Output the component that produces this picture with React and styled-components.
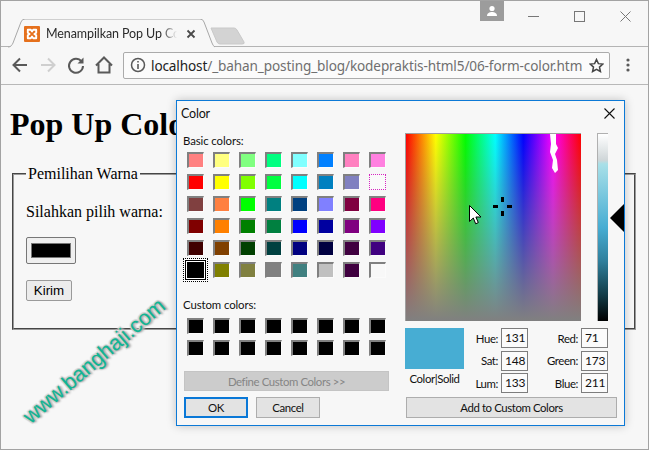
import React from 'react';
import styled, { createGlobalStyle } from 'styled-components';

const Global = createGlobalStyle`
  html, body { margin: 0; padding: 0; background: #f7f7f7; }
`;

const UI = 'Lato, "Open Sans", sans-serif';

const Frame = styled.div`
  position: relative;
  width: 649px;
  height: 450px;
  box-sizing: border-box;
  border: 1px solid #a3a3a3;
  background: #f7f7f7;
  overflow: hidden;
  display: flex;
  flex-direction: column;
`;

const TitleBar = styled.div`
  height: 46px;
  flex: none;
  box-sizing: border-box;
  border-bottom: 1px solid #b4b4b4;
  display: flex;
  align-items: flex-start;
  padding-left: 7px;
`;

const Tab = styled.div`
  position: relative;
  width: 205px;
  height: 29px;
  margin-top: 18px;
  flex: none;
  display: flex;
  align-items: center;
  padding-left: 16px;
  box-sizing: border-box;
`;

const TabShape = styled.svg`
  position: absolute;
  left: 0;
  top: 0;
`;

const Favicon = styled.svg`
  position: relative;
  flex: none;
  margin-right: 6px;
  margin-top: 1px;
`;

const TabTitle = styled.div`
  position: relative;
  width: 131px;
  flex: none;
  overflow: hidden;
  white-space: nowrap;
  font: 12.5px ${UI};
  letter-spacing: -0.1px;
  color: #2b2b2b;
  -webkit-mask-image: linear-gradient(90deg, #000 88%, transparent 100%);
  mask-image: linear-gradient(90deg, #000 88%, transparent 100%);
`;

const TabClose = styled.svg`
  position: relative;
  flex: none;
  margin-left: 9px;
`;

const NewTab = styled.svg`
  flex: none;
  margin: 26px 0 0 -3px;
`;

const Spacer = styled.div`
  flex: 1;
`;

const WindowControls = styled.div`
  display: flex;
  align-items: flex-start;
`;

const Avatar = styled.div`
  width: 24px;
  height: 20px;
  background: #9c9c9c;
  display: flex;
  align-items: center;
  justify-content: center;
  margin-right: 6px;
`;

const WinButton = styled.div`
  width: 46px;
  height: 30px;
  display: flex;
  align-items: center;
  justify-content: center;
`;

const Toolbar = styled.div`
  height: 38px;
  flex: none;
  box-sizing: border-box;
  border-bottom: 1px solid #b8b8b8;
  display: flex;
  align-items: center;
  padding: 0 0 1px 9px;
`;

const NavIcon = styled.svg`
  flex: none;
  margin-right: 8px;
`;

const AddressBar = styled.div`
  width: 487px;
  height: 27px;
  flex: none;
  box-sizing: border-box;
  margin-left: 1px;
  border: 1px solid #ababab;
  border-radius: 2px;
  background: #fbfbfb;
  display: flex;
  align-items: center;
  padding: 0 5px 0 6px;
  gap: 5px;
`;

const Url = styled.div`
  flex: 1;
  font: 13.6px "Noto Sans", sans-serif;
  color: #6f6f6f;
  white-space: nowrap;
  overflow: hidden;
  letter-spacing: -0.13px;
  strong { font-weight: 400; color: #222; }
`;

const Dots = styled.svg`
  flex: none;
  margin-left: 16px;
`;

const Content = styled.main`
  flex: 1;
  padding: 0 10px 0 9px;
  font-family: "Liberation Serif", serif;
  color: #000;
`;

const Heading = styled.h1`
  margin: 21.44px 0;
  font-size: 32px;
  line-height: 37px;
  font-weight: 700;
  white-space: nowrap;
`;

const FieldSet = styled.fieldset`
  margin: 0 2px;
  padding: 4.6px 11px 11px 12px;
  border: 2px groove #9a9a9a;
`;

const Legend = styled.legend`
  padding: 0 2px;
  font-size: 16px;
  line-height: 18px;
`;

const Para = styled.p`
  margin: 16px 0;
  font-size: 16px;
  line-height: 18px;
`;

const FormRow = styled.div`
  margin: 16px 0;
  display: flex;
`;

const ColorInput = styled.div`
  width: 50px;
  height: 27px;
  box-sizing: border-box;
  border: 1px solid #777;
  border-radius: 2px;
  background: #efefef;
  display: flex;
  align-items: center;
  justify-content: center;
`;

const ColorInner = styled.div`
  width: 40px;
  height: 15px;
  box-sizing: border-box;
  border: 1px solid #777;
  background: #000;
`;

const Submit = styled.div`
  width: 46px;
  height: 21px;
  box-sizing: border-box;
  border: 1px solid #9a9a9a;
  border-radius: 2px;
  background: #ececec;
  display: flex;
  align-items: center;
  justify-content: center;
  font: 13.33px "Liberation Sans", sans-serif;
`;

const Watermark = styled.div`
  position: absolute;
  left: -2px;
  top: 347px;
  width: 190px;
  text-align: center;
  transform: rotate(-40.5deg);
  font: 21.5px "Liberation Sans", sans-serif;
  line-height: 26px;
  color: #10b594;
  white-space: nowrap;
  text-shadow: 1px 1px 1px #a9a9a9, -1px -1px 1px #d4d4d4, 2px 2px 2px #bdbdbd, -1px 1px 1px #cfcfcf, 1px -1px 1px #cfcfcf;
`;

const Dialog = styled.section`
  position: absolute;
  left: 175px;
  top: 99px;
  width: 449px;
  height: 326px;
  box-sizing: border-box;
  border: 1px solid #0c79d6;
  background: #f7f7f7;
  box-shadow: 0 0 9px rgba(0, 0, 0, 0.22);
  font: 11.4px ${UI};
  letter-spacing: -0.4px;
  color: #111;
  display: flex;
  flex-direction: column;
`;

const DialogTitle = styled.header`
  height: 25px;
  flex: none;
  display: flex;
  align-items: center;
  justify-content: space-between;
  padding: 0 9px 0 4px;
  font-size: 12.5px;
  letter-spacing: -0.2px;
`;

const DialogBody = styled.div`
  display: flex;
  gap: 16px;
  padding-left: 7px;
`;

const LeftPane = styled.div`
  width: 205px;
  flex: none;
  display: flex;
  flex-direction: column;
`;

const PaneLabel = styled.div`
  height: 14px;
  line-height: 14px;
  margin-top: ${(p) => p.$top}px;
  letter-spacing: -0.1px;
  margin-left: -1px;
`;

const SwatchGrid = styled.div`
  display: grid;
  grid-template-columns: repeat(8, 17px);
  grid-auto-rows: 16px;
  column-gap: 9px;
  row-gap: 6px;
  margin: ${(p) => p.$top}px 0 0 3px;
`;

const Swatch = styled.div`
  box-sizing: border-box;
  background: ${(p) => p.$color};
  border-style: solid;
  border-width: 2px 1px 1px 2px;
  border-color: #808080 #fbfbfb #fbfbfb #808080;
  ${(p) => p.$selected && `
    outline: 1px dotted #000;
    outline-offset: 3px;
    box-shadow: 0 0 0 1px #fff, 0 0 0 2px #000, 0 0 0 3px #fff;
    border-color: #000;
  `}
  ${(p) => p.$marked && `
    border: 1px dotted #d626c0;
  `}
`;

const DefineButton = styled.div`
  height: 20px;
  margin-top: 15px;
  box-sizing: border-box;
  border: 1px solid #c4c4c4;
  background: #cccccc;
  color: #858585;
  display: flex;
  align-items: center;
  justify-content: center;
`;

const ButtonRow = styled.div`
  display: flex;
  gap: 8px;
  margin-top: 6px;
`;

const DialogButton = styled.div`
  width: 64px;
  height: 21px;
  box-sizing: border-box;
  border: ${(p) => (p.$primary ? '2px solid #0a78d7' : '1px solid #adadad')};
  background: #e3e3e3;
  display: flex;
  align-items: center;
  justify-content: center;
`;

const RightPane = styled.div`
  width: 212px;
  flex: none;
  padding-top: 7px;
  display: flex;
  flex-direction: column;
`;

const Pickers = styled.div`
  display: flex;
  gap: 16px;
`;

const SpectrumField = styled.div`
  position: relative;
  width: 176px;
  height: 188px;
  box-sizing: border-box;
  border-top: 1px solid #a0a0a0;
  border-left: 1px solid #a0a0a0;
  background:
    linear-gradient(180deg, rgba(128,128,128,0) 0%, rgba(128,128,128,1) 100%),
    linear-gradient(90deg, #f00 0%, #ff0 17%, #0f0 34%, #0ff 51%, #00f 67%, #f0f 84%, #f00 100%);
`;

const Overlay = styled.svg`
  position: absolute;
  left: ${(p) => p.$x}px;
  top: ${(p) => p.$y}px;
`;

const LumSlider = styled.div`
  position: relative;
  width: 11px;
  height: 188px;
  box-sizing: border-box;
  border-top: 1px solid #b0b0b0;
  border-left: 1px solid #b0b0b0;
  background: linear-gradient(180deg, #fff 0%, #cfd6d8 14%, #a9e0e8 16%, #47add3 50%, #2f7f9c 68%, #123c48 86%, #000 100%);
`;

const LumArrow = styled.div`
  position: absolute;
  left: 12px;
  top: 70px;
  width: 0;
  height: 0;
  border-style: solid;
  border-width: 14px 14px 14px 0;
  border-color: transparent #000 transparent transparent;
`;

const ValuesRow = styled.div`
  display: flex;
  margin-top: 7px;
`;

const PreviewColumn = styled.div`
  width: 59px;
  flex: none;
  display: flex;
  flex-direction: column;
  align-items: center;
`;

const PreviewBox = styled.div`
  width: 59px;
  height: 41px;
  background: #47add3;
`;

const PreviewLabel = styled.div`
  margin-top: 2px;
  height: 16px;
  line-height: 16px;
  white-space: nowrap;
`;

const ValueGrid = styled.div`
  display: grid;
  grid-template-columns: 34px 27px 47px 27px;
  grid-auto-rows: 20px;
  column-gap: 3px;
  row-gap: 2.5px;
  align-items: center;
`;

const ValueLabel = styled.div`
  text-align: right;
`;

const ValueBox = styled.div`
  height: 20px;
  box-sizing: border-box;
  border: 1px solid #7d7d7d;
  background: #fbfbfb;
  padding-left: 3px;
  line-height: 17px;
  font-size: 12px;
  letter-spacing: -0.2px;
`;

const AddButton = styled.div`
  height: 21px;
  margin: 4px 0 0 1px;
  box-sizing: border-box;
  border: 1px solid #adadad;
  background: #e3e3e3;
  display: flex;
  align-items: center;
  justify-content: center;
`;

const BASIC = [
  ['#ff8080', '#ffff80', '#80ff80', '#00ff80', '#80ffff', '#0080ff', '#ff80c0', '#ff80e0'],
  ['#ff0000', '#ffff00', '#80ff00', '#00ff40', '#00ffff', '#0080c0', '#8080c0', '#fafafa'],
  ['#804040', '#ff8040', '#00ff00', '#008080', '#004080', '#8080ff', '#800040', '#ff0080'],
  ['#800000', '#ff8000', '#008000', '#008040', '#0000ff', '#0000a0', '#800080', '#8000ff'],
  ['#400000', '#804000', '#004000', '#004040', '#000080', '#000040', '#400040', '#400080'],
  ['#000000', '#808000', '#808040', '#808080', '#408080', '#c0c0c0', '#400040', '#f8f8f8'],
].flat();

const VALUES = [
  ['Hue:', '131', 'Red:', '71'],
  ['Sat:', '148', 'Green:', '173'],
  ['Lum:', '133', 'Blue:', '211'],
].flat();

export default function App() {
  return (
    <Frame>
      <Global />
      <TitleBar>
        <Tab>
          <TabShape width="208" height="29" viewBox="0 0 208 29">
            <path d="M0 28 C3 28 4 26 5 24 L13 3 Q14 0 17 0 H192 Q195 0 196 3 L204 24 Q205 27 207 28" fill="#f7f7f7" stroke="#a8a8a8" />
          </TabShape>
          <Favicon width="16" height="16" viewBox="0 0 16 16">
            <rect width="16" height="16" rx="1" fill="#e5701c" />
            <path d="M3.8 3.8 H6.8 L8 5.4 L9.2 3.8 H12.2 V6.8 L10.4 8 L12.2 9.2 V12.2 H9.2 L8 10.6 L6.8 12.2 H3.8 V9.2 L5.6 8 L3.8 6.8 Z" fill="none" stroke="#fff" strokeWidth="1.9" strokeLinejoin="round" />
          </Favicon>
          <TabTitle>Menampilkan Pop Up Color</TabTitle>
          <TabClose width="10" height="10" viewBox="0 0 10 10">
            <path d="M1.5 1.5 L8.5 8.5 M8.5 1.5 L1.5 8.5" stroke="#4a4a4a" strokeWidth="1.8" />
          </TabClose>
        </Tab>
        <NewTab width="36" height="18" viewBox="0 0 36 18">
          <path d="M1 1 H24 Q26 1 27 3 L34 15 Q35 17 32 17 H10 Q8 17 7 15 Z" fill="#d3d3d3" stroke="#c9c9c9" />
        </NewTab>
        <Spacer />
        <WindowControls>
          <Avatar>
            <svg width="12" height="12" viewBox="0 0 12 12">
              <circle cx="6" cy="3.5" r="2.6" fill="#fff" />
              <path d="M1 11 C1 8 3.5 7 6 7 C8.5 7 11 8 11 11 Z" fill="#fff" />
            </svg>
          </Avatar>
          <WinButton>
            <svg width="11" height="11" viewBox="0 0 11 11"><path d="M0 5.5 H11" stroke="#777" /></svg>
          </WinButton>
          <WinButton>
            <svg width="11" height="11" viewBox="0 0 11 11"><rect x="0.5" y="0.5" width="10" height="10" fill="none" stroke="#777" /></svg>
          </WinButton>
          <WinButton>
            <svg width="11" height="11" viewBox="0 0 11 11"><path d="M0.5 0.5 L10.5 10.5 M10.5 0.5 L0.5 10.5" stroke="#777" /></svg>
          </WinButton>
        </WindowControls>
      </TitleBar>
      <Toolbar>
        <NavIcon width="20" height="20" viewBox="0 0 20 20">
          <path d="M17 10 H4 M10 3.5 L3.5 10 L10 16.5" fill="none" stroke="#5a5a5a" strokeWidth="2" />
        </NavIcon>
        <NavIcon width="20" height="20" viewBox="0 0 20 20">
          <path d="M3 10 H16 M10 3.5 L16.5 10 L10 16.5" fill="none" stroke="#cfcfcf" strokeWidth="2" />
        </NavIcon>
        <NavIcon width="20" height="20" viewBox="0 0 20 20">
          <path d="M15.5 6.5 A7 7 0 1 0 17 11" fill="none" stroke="#5a5a5a" strokeWidth="2" />
          <path d="M17.5 2.5 V8.5 H11.5 Z" fill="#5a5a5a" />
        </NavIcon>
        <NavIcon width="20" height="20" viewBox="0 0 20 20">
          <path d="M2 10.5 L10 2.5 L18 10.5 M4.5 9 V17.5 H15.5 V9" fill="none" stroke="#5a5a5a" strokeWidth="2" />
        </NavIcon>
        <AddressBar>
          <svg width="16" height="16" viewBox="0 0 16 16" style={{ flex: 'none' }}>
            <circle cx="8" cy="8" r="6.5" fill="none" stroke="#5a5a5a" strokeWidth="1.5" />
            <path d="M8 7 V12 M8 4 V5.6" stroke="#5a5a5a" strokeWidth="1.6" />
          </svg>
          <Url><strong>localhost</strong>/_bahan_posting_blog/kodepraktis-html5/06-form-color.htm</Url>
          <svg width="15" height="15" viewBox="0 0 16 16" style={{ flex: 'none' }}>
            <path d="M8 1.6 L10 6 L14.8 6.5 L11.2 9.7 L12.2 14.4 L8 12 L3.8 14.4 L4.8 9.7 L1.2 6.5 L6 6 Z" fill="none" stroke="#444" strokeWidth="1.6" />
          </svg>
        </AddressBar>
        <Dots width="4" height="14" viewBox="0 0 4 14">
          <circle cx="2" cy="2" r="1.6" fill="#5a5a5a" />
          <circle cx="2" cy="7" r="1.6" fill="#5a5a5a" />
          <circle cx="2" cy="12" r="1.6" fill="#5a5a5a" />
        </Dots>
      </Toolbar>
      <Content>
        <Heading>Pop Up Color</Heading>
        <FieldSet>
          <Legend>Pemilihan Warna</Legend>
          <Para>Silahkan pilih warna:</Para>
          <FormRow>
            <ColorInput><ColorInner /></ColorInput>
          </FormRow>
          <FormRow>
            <Submit>Kirim</Submit>
          </FormRow>
        </FieldSet>
      </Content>
      <Watermark>www.banghaji.com</Watermark>
      <Dialog>
        <DialogTitle>
          <span>Color</span>
          <svg width="11" height="11" viewBox="0 0 11 11">
            <path d="M0.5 0.5 L10.5 10.5 M10.5 0.5 L0.5 10.5" stroke="#111" strokeWidth="1.1" />
          </svg>
        </DialogTitle>
        <DialogBody>
          <LeftPane>
            <PaneLabel $top={8}>Basic colors:</PaneLabel>
            <SwatchGrid $top={4}>
              {BASIC.map((c, i) => (
                <Swatch key={i} $color={c} $selected={i === 40} $marked={i === 15} />
              ))}
            </SwatchGrid>
            <PaneLabel $top={20}>Custom colors:</PaneLabel>
            <SwatchGrid $top={6}>
              {Array.from({ length: 16 }, (_, i) => (
                <Swatch key={i} $color="#000" />
              ))}
            </SwatchGrid>
            <DefineButton>Define Custom Colors &gt;&gt;</DefineButton>
            <ButtonRow>
              <DialogButton $primary>OK</DialogButton>
              <DialogButton>Cancel</DialogButton>
            </ButtonRow>
          </LeftPane>
          <RightPane>
            <Pickers>
              <SpectrumField>
                <Overlay $x={142} $y={0} width="12" height="40" viewBox="0 0 12 40">
                  <path d="M2 0 H8 V10 L10 14 L7 20 L9 26 L10 36 L7 39 L4 34 L5 26 L2 18 L3 10 Z" fill="#fff" />
                </Overlay>
                <Overlay $x={87} $y={63} width="19" height="19" viewBox="0 0 19 19">
                  <path d="M8 0 H11 V5 H8 Z M8 14 H11 V19 H8 Z M0 8 H5 V11 H0 Z M14 8 H19 V11 H14 Z" fill="#000" />
                </Overlay>
                <Overlay $x={63} $y={71} width="13" height="20" viewBox="0 0 13 20">
                  <path d="M0.5 0.5 V16.5 L4.3 13 L6.7 18.8 L9.3 17.6 L6.9 12 H12 Z" fill="#fff" stroke="#000" />
                </Overlay>
              </SpectrumField>
              <LumSlider>
                <LumArrow />
              </LumSlider>
            </Pickers>
            <ValuesRow>
              <PreviewColumn>
                <PreviewBox />
                <PreviewLabel>Color|Solid</PreviewLabel>
              </PreviewColumn>
              <ValueGrid>
                {VALUES.map((v, i) =>
                  i % 2 === 0 ? <ValueLabel key={i}>{v}</ValueLabel> : <ValueBox key={i}>{v}</ValueBox>
                )}
              </ValueGrid>
            </ValuesRow>
            <AddButton>Add to Custom Colors</AddButton>
          </RightPane>
        </DialogBody>
      </Dialog>
    </Frame>
  );
}
